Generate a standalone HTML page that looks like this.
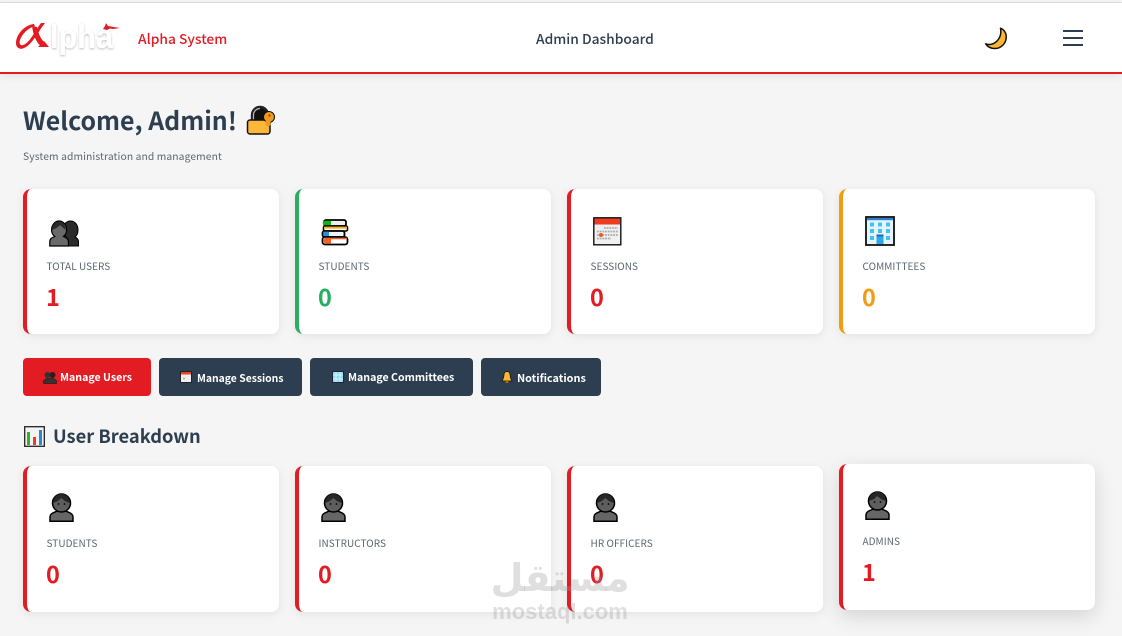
<!DOCTYPE html>
<html><head><meta charset="utf-8"><title>Alpha System</title>
<style>
html,body{margin:0;padding:0}
body{width:1122px;height:636px;overflow:hidden;position:relative;background:#f5f5f5;font-family:"Noto Sans CJK JP","Liberation Sans",sans-serif;color:#2c3e50}
.a{position:absolute;white-space:nowrap;line-height:1}
.top{position:absolute;left:0;top:2px;width:1122px;height:1px;background:#e0e0e0}
.hd{position:absolute;left:0;top:3px;width:1122px;height:69px;background:#fff;border-bottom:2px solid #e31b23;box-shadow:0 2px 8px rgba(0,0,0,.08)}
.card{position:absolute;width:252px;height:145px;background:#fff;border-left:4px solid #e31b23;border-radius:8px;box-shadow:0 2px 10px rgba(0,0,0,.08)}
.lbl{position:absolute;left:19.500px;top:71px;font-size:10px;line-height:12px;color:#5b6770;letter-spacing:.05px;white-space:nowrap}
.num{position:absolute;left:19px;top:91px;font-size:23.500px;font-weight:700;line-height:32px;color:#e31b23}
.btn{position:absolute;top:358px;height:38px;border-radius:4px;background:#2c3e50;color:#fff;font-size:10.600px;font-weight:700;line-height:40px;white-space:nowrap}
.btn span{position:absolute;top:0}
svg{position:absolute;overflow:visible}
</style></head><body>
<div class="top"></div>
<div class="hd"></div>

<svg style="left:14px;top:20px" width="108" height="36" viewBox="0 0 108 36">
<defs><filter id="s" x="-20%" y="-20%" width="140%" height="150%"><feDropShadow dx="0" dy="1" stdDeviation="1" flood-color="#000" flood-opacity=".28"/></filter></defs>
<text x="36" y="28" font-family="Liberation Sans,sans-serif" font-size="33" font-weight="700" fill="#fff" filter="url(#s)" textLength="63" lengthAdjust="spacingAndGlyphs">lpha</text>
<path d="M20 4C10 5 2 15 2 23c0 5 4 7 8 5 8-3 14-16 21-25h-4c-5 6-11 20-18 22-3 1-4-2-3-5 2-6 8-12 15-14z" fill="#e31b23"/>
<path d="M18 6c1 8 4 17 10 21l2-5c-4-4-6-10-7-15z" fill="#e31b23"/>
<path d="M24 27l6-6 5 6z" fill="#e31b23"/>
<path d="M89 9l2-3 1-3 2 3 12 2-7 1-3-.5-3 1.500z" fill="#e31b23"/>
</svg>
<div class="a" style="left:138px;top:31px;font-size:13.800px;font-weight:500;color:#e31b23;line-height:15px">Alpha System</div>
<div class="a" style="left:536px;top:31px;font-size:13.800px;font-weight:500;color:#2c3e50;line-height:15px">Admin Dashboard</div>

<svg style="left:984px;top:27px" width="24" height="24" viewBox="0 0 24 24"><path d="M16.500 1.200c4 1.500 6.200 5.500 5.700 10-.6 5.500-5.200 10.200-11 10.300-4 .1-7.500-1.500-9.500-4.700 3 1.200 6.500.8 9.500-1.300 4.500-3.200 6.500-8.500 5.300-14.300z" fill="#fdb62f" stroke="#111" stroke-width="1.500" stroke-linejoin="round"/></svg>
<div style="position:absolute;left:1063px;top:30px;width:20px;height:2.200px;background:#2c3e50"></div>
<div style="position:absolute;left:1063px;top:37px;width:20px;height:2.200px;background:#2c3e50"></div>
<div style="position:absolute;left:1063px;top:44px;width:20px;height:2.200px;background:#2c3e50"></div>

<div class="a" style="left:23px;top:103px;font-size:24.900px;font-weight:700;line-height:34px;color:#2c3e50">Welcome, Admin!</div>
<svg style="left:246px;top:105px" width="30" height="30" viewBox="0 0 30 30">
<path d="M6 16V10c0-4.500 3.500-8 8-8s8 3.500 8 8v6" fill="#111" stroke="#222" stroke-width="2.400"/>
<path d="M7.500 16V10c0-3.500 3-6.500 6.500-6.500" fill="none" stroke="#bbb" stroke-width="1.200"/>
<rect x="1.500" y="15" width="22.500" height="14" rx="2.500" fill="#fdb73a" stroke="#111" stroke-width="1.500"/>
<circle cx="23" cy="12" r="5.500" fill="#f29a1e" stroke="#111" stroke-width="1"/>
<path d="M19.500 16h5v4l-2 2-3-2z" fill="#f29a1e"/><circle cx="23.500" cy="10.500" r="1" fill="#6b3f08"/>
</svg>
<div class="a" style="left:23px;top:150px;font-size:10.300px;line-height:12px;color:#5b6770;letter-spacing:.1px">System administration and management</div>

<!-- row 1 -->
<div class="card" style="left:23px;top:189px"><div class="lbl">TOTAL USERS</div><div class="num">1</div></div>
<div class="card" style="left:295px;top:189px;border-color:#27ae60"><div class="lbl">STUDENTS</div><div class="num" style="color:#27ae60">0</div></div>
<div class="card" style="left:567px;top:189px"><div class="lbl">SESSIONS</div><div class="num">0</div></div>
<div class="card" style="left:839px;top:189px;border-color:#f39c12"><div class="lbl">COMMITTEES</div><div class="num" style="color:#f39c12">0</div></div>

<svg style="left:49px;top:219px" width="30" height="28" viewBox="0 0 30 28">
<path d="M14 27v-9h3c-2-1.500-3-4-3-7 0-5 3-9 7.500-9S29 6 29 11c0 3-1 5.500-3 7 2 1 3.500 2 3.500 4.500V27z" fill="#2b2b2b" stroke="#000" stroke-width="1"/>
<path d="M.8 27v-4.500c0-3 2.500-4 5-5-2-1.500-3.200-4-3.200-6.500 0-5 3.200-9 7.500-9s7.500 4 7.500 9c0 2.500-1.200 5-3.200 6.500 2.500 1 5 2 5 5V27z" fill="#6a6a6a" stroke="#000" stroke-width="1.200"/>
<path d="M3 11c2.500-1 6-2.500 8-5l5.500 5C16.500 6 14 2.500 10 2.500S3 6 3 11z" fill="#2a2a2a"/>
</svg>
<svg style="left:321px;top:219px" width="28" height="27" viewBox="0 0 28 27">
<rect x="3" y="1" width="22" height="6" rx="2" fill="#eee" stroke="#000" stroke-width="1.800"/><path d="M3.500 1.800h6.500v4.500H4.500a2.300 2.300 0 0 1-1-4.500z" fill="#16b01a"/>
<rect x="2.500" y="7" width="24" height="5" rx="1.500" fill="#fff" stroke="#000" stroke-width="1.600"/><path d="M3 7.800h23v1.800H3z" fill="#fcaa1f"/>
<rect x="1.500" y="12" width="22" height="6" rx="2" fill="#eef5fb" stroke="#000" stroke-width="1.800"/><path d="M2 12.800h6v4.500H3z" fill="#2a8fd8"/>
<rect x="1.500" y="18" width="25" height="7.500" rx="2.500" fill="#fff" stroke="#000" stroke-width="1.800"/><path d="M2 18.800h24v1.500H10v4.500H4q-2.500-3 0-6z" fill="#f0602a"/>
</svg>
<svg style="left:593px;top:217px" width="29" height="29" viewBox="0 0 29 29">
<rect x=".8" y=".8" width="27" height="27" fill="#f0f0f0" stroke="#111" stroke-width="1.400"/>
<rect x="1.500" y="1.500" width="25.500" height="6" fill="#ee3d1e"/>
<g fill="none" stroke="#aaa" stroke-width="1.800" stroke-dasharray="1.800 .9"><path d="M11 11h14M4 14.500h21M4 18h21M4 21.500h14"/></g>
<circle cx="8" cy="18" r="2" fill="#ee5a2a"/>
</svg>
<svg style="left:865px;top:216px" width="30" height="30" viewBox="0 0 30 30">
<rect x="1" y="1" width="28" height="28" fill="#e8f3fb" stroke="#111" stroke-width="1.800"/>
<rect x="2" y="2" width="26" height="2.200" fill="#2e7fd6"/>
<g fill="#3cc6f5"><rect x="5" y="6.500" width="4" height="4"/><rect x="13" y="6.500" width="4" height="4"/><rect x="21" y="6.500" width="4" height="4"/><rect x="5" y="13" width="4" height="4"/><rect x="13" y="13" width="4" height="4"/><rect x="21" y="13" width="4" height="4"/><rect x="5" y="20" width="4" height="4"/><rect x="21" y="20" width="4" height="4"/></g>
<path d="M11.500 28V20q0-1.500 1.500-1.500h4q1.500 0 1.500 1.500v8z" fill="#2aa9ea"/><rect x="11.500" y="18.500" width="7" height="2" fill="#2467b8"/>
</svg>

<!-- buttons -->
<div class="btn" style="left:23px;width:128px;background:#e31b23"><span style="left:37px">Manage Users</span></div>
<div class="btn" style="left:159px;width:143px;font-size:10.400px"><span style="left:38px">Manage Sessions</span></div>
<div class="btn" style="left:310px;width:163px"><span style="left:38px">Manage Committees</span></div>
<div class="btn" style="left:481px;width:120px;font-size:10.900px"><span style="left:36px">Notifications</span></div>
<svg style="left:43px;top:371px" width="14" height="13" viewBox="0 0 14 13"><circle cx="4.500" cy="4" r="3" fill="#333"/><circle cx="9.500" cy="4" r="3" fill="#222"/><path d="M.5 12.500V9.500l3-2h7l3 2v3z" fill="#333" stroke="#111" stroke-width=".5"/></svg>
<svg style="left:180px;top:371px" width="12" height="12" viewBox="0 0 12 12"><rect x=".5" y=".5" width="11" height="11" fill="#eee" stroke="#222"/><rect x="1" y="1" width="10" height="2.500" fill="#e8462a"/><circle cx="4" cy="7.500" r="1" fill="#e8a090"/></svg>
<svg style="left:332px;top:371px" width="12" height="12" viewBox="0 0 12 12"><rect x=".5" y=".5" width="11" height="11" fill="#8fdcf7" stroke="#223"/><path d="M4 1v10M8 1v10M1 4h10M1 8h10" stroke="#e8f6fc" stroke-width=".8"/></svg>
<svg style="left:501px;top:371px" width="12" height="12" viewBox="0 0 12 12"><path d="M6 .5C4 .5 3 2 3 4c0 3-1 4-2 6h10c-1-2-2-3-2-6 0-2-1-3.500-3-3.500z" fill="#fdb62f" stroke="#111" stroke-width=".7"/><rect x="4.500" y="10" width="3" height="2" fill="#a56a10"/></svg>

<!-- section -->
<svg style="left:24px;top:426px" width="21" height="21" viewBox="0 0 21 21"><rect x=".7" y=".7" width="19.600" height="19.600" fill="#f4f4f4" stroke="#222" stroke-width="1.300"/><rect x="3" y="6" width="3" height="13" fill="#2cb52c"/><rect x="9" y="11" width="3" height="8" fill="#ee3b22"/><rect x="15" y="4" width="3" height="15" fill="#2a87d8"/></svg>
<div class="a" style="left:53px;top:425px;font-size:18.300px;font-weight:700;line-height:23px;color:#2c3e50">User Breakdown</div>

<!-- row 2 -->
<div class="card" style="left:23px;top:466px;height:146px"><div class="lbl">STUDENTS</div><div class="num">0</div></div>
<div class="card" style="left:295px;top:466px;height:146px"><div class="lbl">INSTRUCTORS</div><div class="num">0</div></div>
<div class="card" style="left:567px;top:466px;height:146px"><div class="lbl">HR OFFICERS</div><div class="num">0</div></div>
<div class="card" style="left:839px;top:464px;height:146px;box-shadow:0 6px 20px rgba(0,0,0,.14)"><div class="lbl">ADMINS</div><div class="num">1</div></div>

<svg width="0" height="0" style="position:absolute"><defs><g id="b"><path d="M1 28.200v-4c0-3.500 3.500-4.700 7-6h9c3.500 1.300 7 2.500 7 6v4z" fill="#666" stroke="#000" stroke-width="1.500"/><circle cx="12.500" cy="10" r="9" fill="#5e5e5e" stroke="#000" stroke-width="1.500"/><path d="M4 10c2-.5 6-2 8-5l4 3c1.500 1 3 1.500 5 2 0-5-3.500-9-8.500-9S4 5 4 10z" fill="#262626"/><circle cx="9.500" cy="11" r=".9" fill="#000"/><circle cx="15.500" cy="11" r=".9" fill="#000"/></g></defs></svg>
<svg style="left:49px;top:493px" width="25" height="29" viewBox="0 0 25 29"><use href="#b"/></svg>
<svg style="left:321px;top:493px" width="25" height="29" viewBox="0 0 25 29"><use href="#b"/></svg>
<svg style="left:593px;top:493px" width="25" height="29" viewBox="0 0 25 29"><use href="#b"/></svg>
<svg style="left:865px;top:491px" width="25" height="29" viewBox="0 0 25 29"><use href="#b"/></svg>

<!-- watermark -->
<div class="a" style="left:490px;top:556px;width:140px;text-align:center;font-family:'DejaVu Sans',sans-serif;font-size:38px;font-weight:700;color:rgba(150,150,150,.3);line-height:44px">مستقل</div>
<div class="a" style="left:490px;top:600px;width:140px;text-align:center;font-family:'Liberation Sans',sans-serif;font-size:22px;font-weight:700;color:rgba(150,150,150,.3);line-height:24px">mostaql.com</div>
</body></html>
